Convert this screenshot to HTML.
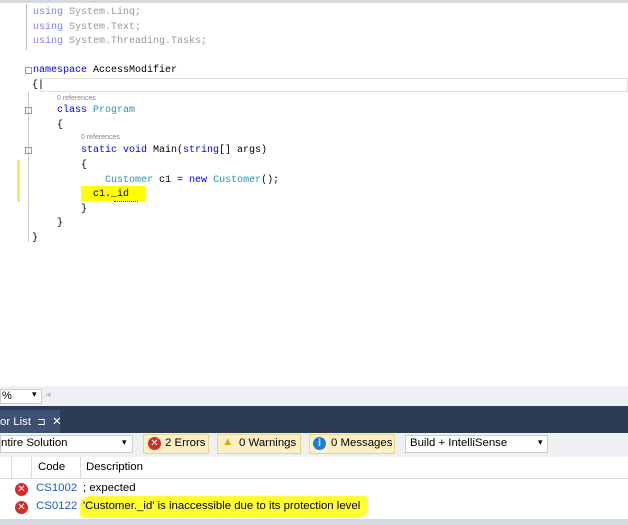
<!DOCTYPE html>
<html><head><style>
*{margin:0;padding:0;box-sizing:border-box}
body{width:628px;height:525px;background:#fff;position:relative;overflow:hidden;font-family:"Liberation Sans",sans-serif}
.c{position:absolute;font-family:"Liberation Mono",monospace;font-size:10px;color:#000;white-space:pre;line-height:13px}
.k{color:#0000ff}.t{color:#2b91af}.g{color:#999}
.ref{position:absolute;font-size:7px;color:#888}
.a{position:absolute}
.s{font-size:11.4px;position:absolute;white-space:nowrap}
</style></head><body>
<div class="a" style="left:0;top:0;width:628px;height:3px;background:#d5d9e0"></div>
<div class="a" style="left:26px;top:4px;width:1px;height:46px;background:#bbb"></div>
<div class="c" style="left:33px;top:6px"><span class="k" style="color:#8080ff">using</span><span class="g"> System.Linq;</span></div>
<div class="c" style="left:33px;top:21px"><span class="k" style="color:#8080ff">using</span><span class="g"> System.Text;</span></div>
<div class="c" style="left:33px;top:35px"><span class="k" style="color:#8080ff">using</span><span class="g"> System.Threading.Tasks;</span></div>
<div class="a" style="left:25px;top:67px;width:7px;height:7px;border:1px solid #999"></div>
<div class="c" style="left:33px;top:64px"><span class="k">namespace</span> AccessModifier</div>
<div class="a" style="left:40px;top:78px;width:588px;height:14px;border:1px solid #e0e0e0"></div>
<div class="c" style="left:32px;top:79px">{|</div>
<div class="a" style="left:28px;top:92px;width:1px;height:150px;background:#ccc"></div>
<div class="ref" style="left:57px;top:95px">0 references</div>
<div class="a" style="left:25px;top:107px;width:7px;height:7px;border:1px solid #999"></div>
<div class="c" style="left:57px;top:104px"><span class="k">class</span> <span class="t">Program</span></div>
<div class="c" style="left:57px;top:119px">{</div>
<div class="ref" style="left:81px;top:134px">0 references</div>
<div class="a" style="left:25px;top:147px;width:7px;height:7px;border:1px solid #999"></div>
<div class="c" style="left:81px;top:144px"><span class="k">static void</span> Main(<span class="k">string</span>[] args)</div>
<div class="c" style="left:81px;top:159px">{</div>
<div class="a" style="left:17px;top:160px;width:3px;height:42px;background:#eeee66"></div>
<div class="c" style="left:105px;top:174px"><span class="t">Customer</span> c1 = <span class="k">new</span> <span class="t">Customer</span>();</div>
<div class="a" style="left:81px;top:186px;width:65px;height:15px;background:#ffff00"></div>
<div class="c" style="left:93px;top:188px">c1._id</div>
<div class="a" style="left:114px;top:200px;width:24px;height:2px;border-bottom:1px dotted #e00"></div>
<div class="c" style="left:81px;top:203px">}</div>
<div class="c" style="left:57px;top:217px">}</div>
<div class="c" style="left:32px;top:232px">}</div>

<div class="a" style="left:0;top:386px;width:628px;height:20px;background:#eef0f4"></div>
<div class="a" style="left:0;top:389px;width:42px;height:15px;background:#fff;border:1px solid #ccc"></div>
<div class="s" style="left:2px;top:390px;font-size:11px">%</div>
<div class="s" style="left:32px;top:389px;font-size:9px">▾</div>
<div class="s" style="left:46px;top:389px;font-size:9px;color:#bbb">◂</div>
<div class="a" style="left:0;top:406px;width:628px;height:27px;background:#2c3b56"></div>
<div class="a" style="left:0;top:410px;width:60px;height:23px;background:#3e5073"></div>
<div class="s" style="left:0;top:414px;color:#fff">or List&nbsp; <span style="font-size:10px">⊐</span>&nbsp; ✕</div>
<div class="a" style="left:0;top:433px;width:628px;height:24px;background:#eef0f4"></div>
<div class="a" style="left:0;top:435px;width:133px;height:18px;background:#fff;border:1px solid #ccc"></div>
<div class="s" style="left:1px;top:437px">ntire Solution</div>
<div class="s" style="left:122px;top:437px;font-size:9px">▾</div>
<div class="a" style="left:143px;top:434px;width:66px;height:20px;background:#fdf0c4;border:1px solid #e8d38a"></div>
<div class="a" style="left:148px;top:437px;width:13px;height:13px;border-radius:50%;background:#d62b2b;color:#fff;font-size:10px;text-align:center;line-height:13px">✕</div>
<div class="s" style="left:165px;top:437px">2 Errors</div>
<div class="a" style="left:217px;top:434px;width:84px;height:20px;background:#fdf0c4;border:1px solid #e8d38a"></div>
<div class="s" style="left:222px;top:436px;color:#e0a800">▲</div>
<div class="s" style="left:239px;top:437px">0 Warnings</div>
<div class="a" style="left:309px;top:434px;width:86px;height:20px;background:#fdf0c4;border:1px solid #e8d38a"></div>
<div class="a" style="left:313px;top:437px;width:13px;height:13px;border-radius:50%;background:#1c7fd6;color:#fff;font-size:10px;text-align:center;line-height:13px;font-weight:bold">i</div>
<div class="s" style="left:331px;top:437px">0 Messages</div>
<div class="a" style="left:405px;top:435px;width:143px;height:18px;background:#fff;border:1px solid #ccc"></div>
<div class="s" style="left:410px;top:437px">Build + IntelliSense</div>
<div class="s" style="left:538px;top:437px;font-size:9px">▾</div>
<div class="a" style="left:0;top:457px;width:628px;height:22px;background:#fff;border-bottom:1px solid #ddd"></div>
<div class="a" style="left:11px;top:457px;width:1px;height:22px;background:#ddd"></div>
<div class="a" style="left:31px;top:457px;width:1px;height:22px;background:#ddd"></div>
<div class="a" style="left:80px;top:457px;width:1px;height:22px;background:#ddd"></div>
<div class="s" style="left:38px;top:461px">Code</div>
<div class="s" style="left:86px;top:461px">Description</div>
<div class="a" style="left:15px;top:483px;width:13px;height:13px;border-radius:50%;background:#d62b2b;color:#fff;font-size:10px;text-align:center;line-height:13px">✕</div>
<div class="s" style="left:36px;top:482px;color:#1e5fb4">CS1002</div>
<div class="s" style="left:83px;top:482px">; expected</div>
<div class="a" style="left:80px;top:496px;width:288px;height:22px;background:#ffff33;border-radius:10px 4px 10px 4px"></div>
<div class="a" style="left:15px;top:501px;width:13px;height:13px;border-radius:50%;background:#d62b2b;color:#fff;font-size:10px;text-align:center;line-height:13px">✕</div>
<div class="s" style="left:36px;top:500px;color:#1e5fb4">CS0122</div>
<div class="s" style="left:83px;top:500px">'Customer._id' is inaccessible due to its protection level</div>
<div class="a" style="left:0;top:519px;width:628px;height:6px;background:#d5d9e0"></div>
</body></html>
